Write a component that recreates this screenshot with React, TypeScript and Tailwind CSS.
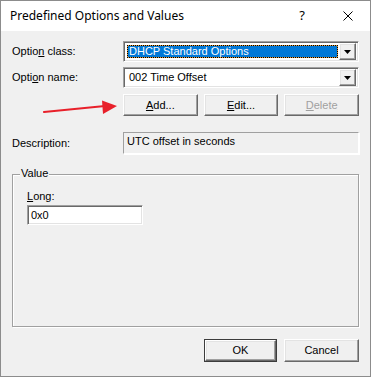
import React from 'react';

const raised =
  'border border-t-white border-l-white border-b-[#696969] border-r-[#696969] shadow-[inset_-1px_-1px_0_#a0a0a0,inset_1px_1px_0_#e3e3e3] bg-[#f0f0f0]';
const sunken =
  'border border-t-[#a0a0a0] border-l-[#a0a0a0] border-b-white border-r-white shadow-[inset_1px_1px_0_#696969,inset_-1px_-1px_0_#e3e3e3]';

function ComboArrow() {
  return (
    <div className={`w-[17px] h-[17px] flex items-center justify-center shrink-0 ${raised}`}>
      <svg width="7" height="4" viewBox="0 0 7 4">
        <path d="M0 0h7L3.5 4z" fill="#000" />
      </svg>
    </div>
  );
}

function Combo({ children, selected }: { children: React.ReactNode; selected?: boolean }) {
  return (
    <div className={`flex-1 h-[21px] bg-white flex items-center p-[2px] ${sunken}`}>
      <div className="flex-1 h-full pl-[1px] pr-[1px] py-[1px]">
        {selected ? (
          <div className="h-full border border-dotted border-black bg-[#e39a3a]">
            <div className="h-full bg-[#0078d7] text-white flex items-center pl-[1px] leading-none">{children}</div>
          </div>
        ) : (
          <div className="h-full flex items-center pl-[2px] leading-none">{children}</div>
        )}
      </div>
      <ComboArrow />
    </div>
  );
}

function Btn({ children, disabled, isDefault }: { children: React.ReactNode; disabled?: boolean; isDefault?: boolean }) {
  const inner = (
    <div
      className={`h-full w-full flex items-center justify-center ${raised} ${disabled ? 'text-[#a0a0a0]' : 'text-black'}`}
    >
      {children}
    </div>
  );
  if (isDefault) {
    return <div className="w-[75px] h-[23px] border border-[#3c3c3c]">{inner}</div>;
  }
  return <div className="w-[75px] h-[22px]">{inner}</div>;
}

export default function App() {
  return (
    <div
      className="relative w-[371px] h-[377px] border border-[#8c8c8c] flex flex-col text-[11px] text-black select-none"
      style={{ fontFamily: '"Liberation Sans", Arial, sans-serif' }}
    >
      <div className="h-[30px] bg-white flex items-center shrink-0">
        <span className="pl-[9px] text-[12px] text-black" style={{ fontFamily: '"Noto Sans", sans-serif' }}>
          Predefined Options and Values
        </span>
        <span className="ml-auto mr-[38px] text-[13px]" style={{ fontFamily: '"Noto Sans", sans-serif' }}>?</span>
        <svg className="mr-[17px]" width="10" height="10" viewBox="0 0 10 10">
          <path d="M0.5 0.5L9.5 9.5M9.5 0.5L0.5 9.5" stroke="#000" strokeWidth="1" />
        </svg>
      </div>

      <div className="flex-1 bg-[#f0f0f0] px-[11px] pt-[10px] flex flex-col">
        <div className="flex items-center">
          <div className="w-[111px]">
            Optio<u>n</u> class:
          </div>
          <Combo selected>DHCP Standard Options</Combo>
        </div>

        <div className="flex items-center mt-[5px]">
          <div className="w-[111px]">
            Opti<u>o</u>n name:
          </div>
          <Combo>002 Time Offset</Combo>
        </div>

        <div className="flex mt-[6px] ml-[111px] gap-[6px]">
          <Btn>
            <span><u>A</u>dd...</span>
          </Btn>
          <Btn>
            <span><u>E</u>dit...</span>
          </Btn>
          <Btn disabled>
            <span><u>D</u>elete</span>
          </Btn>
        </div>

        <div className="flex items-center mt-[16px]">
          <div className="w-[111px]">Description:</div>
          <div className="flex-1 h-[22px] border border-t-[#a0a0a0] border-l-[#a0a0a0] border-b-white border-r-white shadow-[1px_1px_0_#fff,inset_1px_1px_0_#f0f0f0] pl-[3px] pt-[3px] leading-none">
            UTC offset in seconds
          </div>
        </div>

        <div className="relative mt-[20px] h-[153px] border border-[#a0a0a0] shadow-[inset_1px_1px_0_#fff,1px_1px_0_#fff] pl-[14px] pt-[15px]">
          <span className="absolute top-[-8px] left-[7px] px-[1px] bg-[#f0f0f0] leading-[13px]">Value</span>
          <div className="leading-[13px]">
            <u>L</u>ong:
          </div>
          <div className={`mt-[2px] w-[116px] h-[20px] bg-white flex items-center pl-[3px] ${sunken}`}>0x0</div>
        </div>

        <div className="flex mt-[12px] ml-[192px] gap-[7px]">
          <Btn isDefault>OK</Btn>
          <div className="h-[23px]">
            <div className={`w-[75px] h-[23px] flex items-center justify-center ${raised}`}>Cancel</div>
          </div>
        </div>
      </div>

      <svg className="absolute left-[40px] top-[96px] pointer-events-none" width="80" height="20" viewBox="0 0 80 20">
        <path d="M3 15L64 9" stroke="#e8202a" strokeWidth="2.2" strokeLinecap="round" />
        <path d="M61 3.5L76 9L62 17z" fill="#e8202a" />
      </svg>
    </div>
  );
}
